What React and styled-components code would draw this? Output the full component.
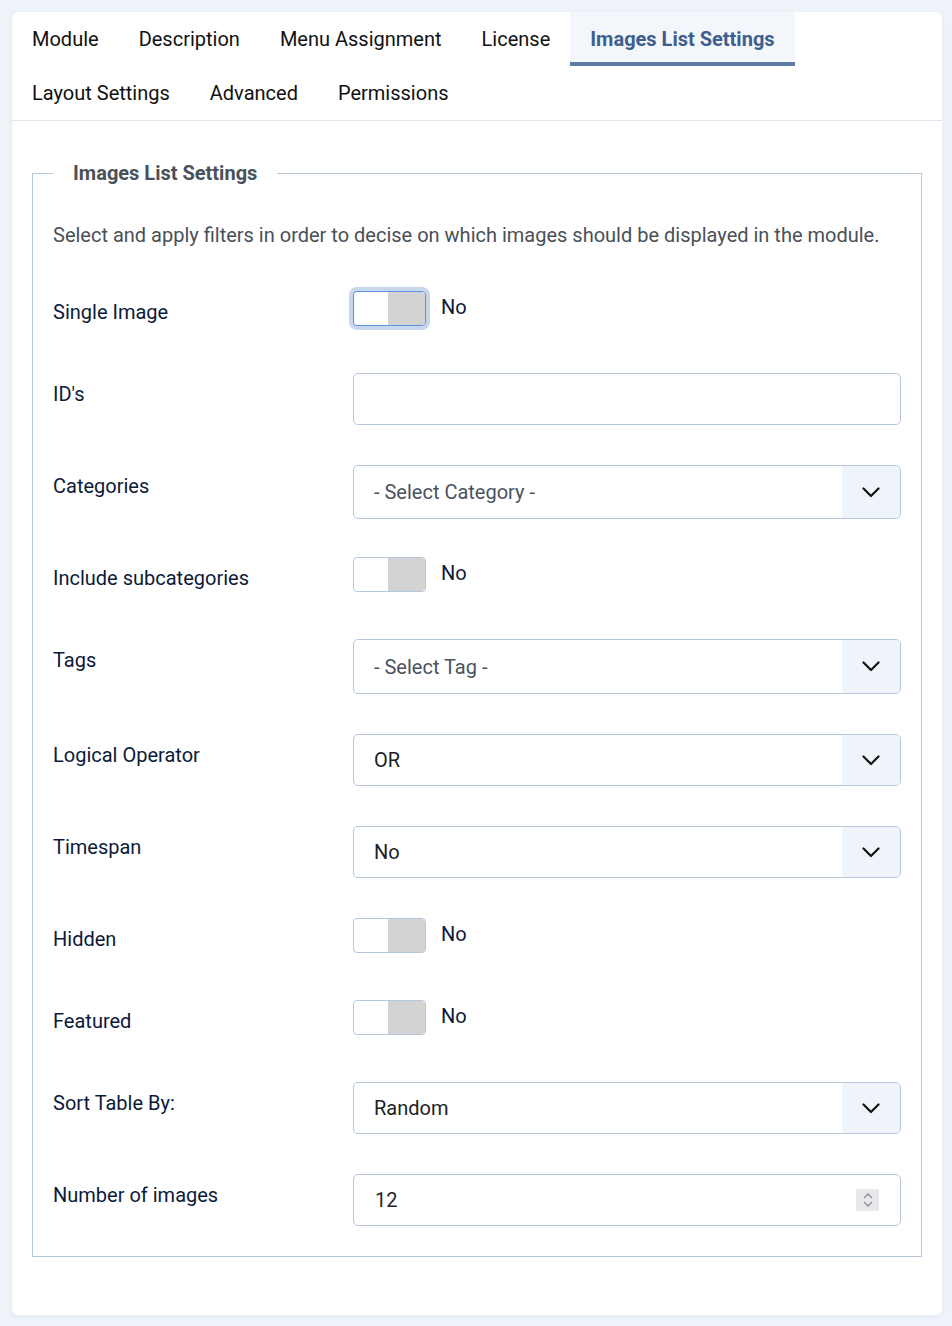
import React from "react";
import styled, { createGlobalStyle, css } from "styled-components";

const Global = createGlobalStyle`
  html, body { margin: 0; padding: 0; }
  body {
    background: #eef3fa;
    font-family: Roboto, "Noto Sans", Arial, sans-serif;
    font-size: 20px;
    color: #22262a;
  }
  * { box-sizing: border-box; }
`;

const Card = styled.div`
  margin: 12px 10px 12px 12px;
  background: #fff;
  border-radius: 6px;
  box-shadow: 0 2px 5px rgba(30, 60, 110, 0.06);
  overflow: hidden;
`;

const TabList = styled.div`
  display: flex;
  flex-wrap: wrap;
  border-bottom: 1px solid #dde4ee;
`;

const Tab = styled.div`
  height: 54px;
  line-height: 54px;
  padding: 0 20px;
  font-size: 20px;
  color: #111;
  white-space: nowrap;
  ${(p) =>
    p.$active &&
    css`
      background: #f3f6fa;
      color: #3e5f8e;
      font-weight: 700;
      box-shadow: inset 0 -4px 0 #5d7ca5;
    `}
`;

const Content = styled.div`
  padding: 38px 20px 58px;
`;

const Fieldset = styled.fieldset`
  margin: 0;
  border: 1px solid #b6c6dc;
  padding: 33px 20px 30px;
  min-width: 0;
`;

const Legend = styled.legend`
  padding: 0 20px;
  font-size: 20px;
  line-height: 29px;
  font-weight: 700;
  color: #4a5158;
`;

const Intro = styled.p`
  margin: 0 0 41px;
  line-height: 29px;
  color: #495057;
`;

const Row = styled.div`
  display: grid;
  grid-template-columns: 300px 1fr;
  align-items: start;
  margin-bottom: ${(p) => p.$gap ?? 40}px;
  &:last-child { margin-bottom: 0; }
`;

const Label = styled.div`
  padding: 7px 0 6px;
  line-height: 29px;
  color: #0c1a3a;
`;

const SwitchWrap = styled.div`
  display: flex;
  align-items: center;
  height: 35px;
`;

const Switch = styled.span`
  display: flex;
  width: 73px;
  height: 35px;
  border: 1px solid #b6c6dc;
  border-radius: 4px;
  overflow: hidden;
  background: #fff;
  ${(p) =>
    p.$focus &&
    css`
      border-color: #5b93e0;
      box-shadow: 0 0 0 4px #c8d7ec;
    `}
  &::after {
    content: "";
    margin-left: auto;
    width: 37px;
    background: #d3d3d3;
  }
`;

const SwitchText = styled.span`
  margin-left: 15px;
  margin-top: -3px;
  color: #0c1a3a;
`;

const TextBox = styled.div`
  display: flex;
  align-items: center;
  justify-content: space-between;
  height: ${(p) => p.$h || 52}px;
  border: 1px solid #b6c6dc;
  border-radius: 5px;
  background: #fff;
  padding: 0 21px 0 21px;
  color: #22262a;
`;

const SelectBox = styled.div`
  display: flex;
  align-items: stretch;
  height: ${(p) => p.$h || 52}px;
  border: 1px solid #b6c6dc;
  border-radius: 5px;
  background: #fff;
  overflow: hidden;
`;

const SelectValue = styled.div`
  flex: 1;
  display: flex;
  align-items: center;
  padding-left: 20px;
  color: ${(p) => (p.$placeholder ? "#4a5360" : "#1c1f24")};
`;

const Caret = styled.div`
  width: 58px;
  display: flex;
  align-items: center;
  justify-content: center;
  background: #eff4fa;
`;

const Spinner = styled.div`
  width: 23px;
  height: 22px;
  background: #e8e8ec;
  border-radius: 2px;
  display: flex;
  align-items: center;
  justify-content: center;
`;

const Chevron = () => (
  <svg width="18" height="11" viewBox="0 0 18 11" fill="none">
    <path d="M1.5 1.5 L9 9 L16.5 1.5" stroke="#111" strokeWidth="2.2" strokeLinecap="round" strokeLinejoin="round" />
  </svg>
);

const SpinIcon = () => (
  <svg width="12" height="18" viewBox="0 0 12 18" fill="none">
    <path d="M2.5 6.5 L6 3 L9.5 6.5" stroke="#8d8d9a" strokeWidth="1.4" strokeLinecap="round" strokeLinejoin="round" />
    <path d="M2.5 11.5 L6 15 L9.5 11.5" stroke="#8d8d9a" strokeWidth="1.4" strokeLinecap="round" strokeLinejoin="round" />
  </svg>
);

const tabs = [
  "Module",
  "Description",
  "Menu Assignment",
  "License",
  "Images List Settings",
  "Layout Settings",
  "Advanced",
  "Permissions",
];

const ToggleRow = ({ label, focus }) => (
  <Row>
    <Label>{label}</Label>
    <SwitchWrap>
      <Switch $focus={focus} />
      <SwitchText>No</SwitchText>
    </SwitchWrap>
  </Row>
);

const SelectRow = ({ label, value, placeholder, h, gap }) => (
  <Row $gap={gap}>
    <Label>{label}</Label>
    <SelectBox $h={h}>
      <SelectValue $placeholder={placeholder}>{value}</SelectValue>
      <Caret>
        <Chevron />
      </Caret>
    </SelectBox>
  </Row>
);

export default function App() {
  return (
    <>
      <Global />
      <Card>
        <TabList>
          {tabs.map((t) => (
            <Tab key={t} $active={t === "Images List Settings"}>
              {t}
            </Tab>
          ))}
        </TabList>
        <Content>
          <Fieldset>
            <Legend>Images List Settings</Legend>
            <Intro>
              Select and apply filters in order to decise on which images should be displayed in the module.
            </Intro>
            <ToggleRow label="Single Image" focus />
            <Row>
              <Label>ID's</Label>
              <TextBox />
            </Row>
            <SelectRow label="Categories" value="- Select Category -" placeholder h={54} gap={38} />
            <ToggleRow label="Include subcategories" />
            <SelectRow label="Tags" value="- Select Tag -" placeholder h={55} />
            <SelectRow label="Logical Operator" value="OR" />
            <SelectRow label="Timespan" value="No" />
            <ToggleRow label="Hidden" />
            <ToggleRow label="Featured" />
            <SelectRow label="Sort Table By:" value="Random" />
            <Row>
              <Label>Number of images</Label>
              <TextBox>
                <span>12</span>
                <Spinner>
                  <SpinIcon />
                </Spinner>
              </TextBox>
            </Row>
          </Fieldset>
        </Content>
      </Card>
    </>
  );
}
